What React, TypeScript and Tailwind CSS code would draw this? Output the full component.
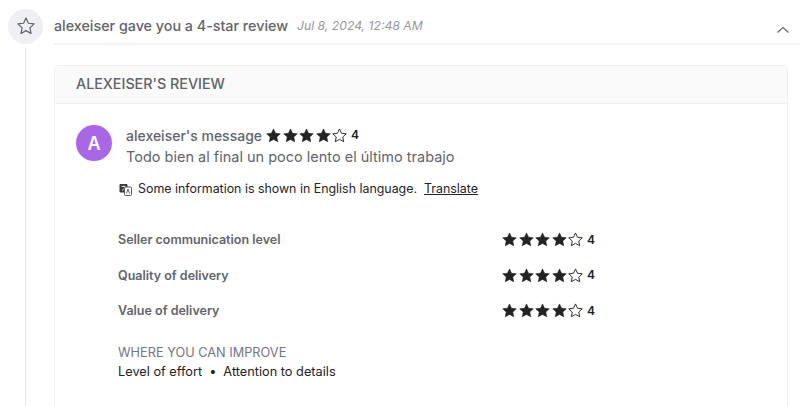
const font = { fontFamily: "Inter, sans-serif" };

function Star({ filled, size = 15 }: { filled: boolean; size?: number }) {
  return (
    <svg width={size} height={size} viewBox="0 0 24 24" className="shrink-0">
      <path
        d="M12 1.5l3.2 6.9 7.6.9-5.6 5.1 1.5 7.5L12 18.2l-6.7 3.7 1.5-7.5-5.6-5.1 7.6-.9z"
        fill={filled ? "#222325" : "none"}
        stroke="#222325"
        strokeWidth={filled ? 1 : 1.5}
        strokeLinejoin="round"
      />
    </svg>
  );
}

function Rating() {
  return (
    <div className="flex items-center">
      <div className="flex items-center gap-[1.5px]">
        <Star filled />
        <Star filled />
        <Star filled />
        <Star filled />
        <Star filled={false} />
      </div>
      <span className="ml-1 text-xs font-semibold text-[#222325]">4</span>
    </div>
  );
}

function TranslateIcon() {
  return (
    <svg width="13" height="13" viewBox="0 0 13 13" className="shrink-0">
      <rect x="0.5" y="1" width="8" height="8.5" rx="1" fill="#3a3a3a" />
      <path d="M2.5 3.5h4M4.5 2.5v1M3 7.5c1.5-.8 2.5-2 3-4" stroke="#fff" strokeWidth="0.8" fill="none" />
      <rect x="5.5" y="4" width="7" height="8.5" rx="1" fill="#fff" stroke="#555" />
      <path d="M7.5 10.5L9 6l1.5 4.5" stroke="#555" strokeWidth="0.9" fill="none" />
    </svg>
  );
}

function ScoreRow({ label }: { label: string }) {
  return (
    <div className="flex h-[35.5px] items-center">
      <span className="w-[384px] pt-[2px] text-[12.5px] font-semibold text-[#62646a]">{label}</span>
      <Rating />
    </div>
  );
}

export default function App() {
  return (
    <div style={font} className="flex h-[406px] w-[800px] overflow-hidden bg-white pl-2 pt-[9px]">
      <div className="flex w-[35px] shrink-0 flex-col items-center">
        <div className="flex h-[35px] w-[35px] items-center justify-center rounded-full bg-[#efeff4] pb-[2px]">
          <svg width="20" height="20" viewBox="0 0 24 24" fill="none" stroke="#5f6472" strokeWidth="1.5" strokeLinejoin="round">
            <path d="M12 2.5l2.9 6.2 6.8.8-5 4.7 1.3 6.8-6-3.4-6 3.4 1.3-6.8-5-4.7 6.8-.8z" />
          </svg>
        </div>
        <div className="mt-[4px] w-px flex-1 bg-[#e8e8e8]" />
      </div>
      <div className="ml-[11px] flex min-w-0 flex-1 flex-col">
        <div className="flex h-[36px] shrink-0 items-center border-b-2 border-[#f5f5f5]">
          <span className="text-[14.3px] font-medium text-[#62646a]">alexeiser gave you a 4-star review</span>
          <span className="ml-[9px] text-[12.2px] italic text-[#95979d]">Jul 8, 2024, 12:48 AM</span>
          <svg className="ml-auto mr-[10px] mt-[7px]" width="14" height="14" viewBox="0 0 14 14" fill="none" stroke="#62646a" strokeWidth="1.1">
            <path d="M1.5 9.5L7 4.5l5.5 5" />
          </svg>
        </div>
        <div className="mr-3 mt-5 h-[400px] shrink-0 rounded-t border border-[#f0f0f0]">
          <div className="flex h-[38px] items-center border-b border-[#f0f0f0] bg-[#fafafa] pb-[1px] pl-[21px] text-[14.3px] font-medium text-[#62646a]">
            ALEXEISER'S REVIEW
          </div>
          <div className="pl-[21px] pt-[21px]">
            <div className="flex">
              <div className="flex h-[36px] w-[36px] items-center justify-center rounded-full bg-[#a967e8] text-[18px] font-semibold text-white">
                A
              </div>
              <div className="ml-[14px]">
                <div className="flex h-[20px] items-center gap-[4px]">
                  <span className="text-[14px] font-medium text-[#62646a]">alexeiser's message</span>
                  <Rating />
                </div>
                <p className="mt-[1px] text-[14.5px] text-[#62646a]">Todo bien al final un poco lento el último trabajo</p>
              </div>
            </div>
            <div className="ml-[43px] mt-[12px] flex h-[20px] items-center text-[12.4px] text-[#222325]">
              <TranslateIcon />
              <span className="ml-[6px]">Some information is shown in English language.</span>
              <span className="ml-[7px] underline">Translate</span>
            </div>
            <div className="ml-[42px] mt-[22px]">
              <ScoreRow label="Seller communication level" />
              <ScoreRow label="Quality of delivery" />
              <ScoreRow label="Value of delivery" />
              <div className="mt-[15px] text-[12.75px] text-[#74767e]">WHERE YOU CAN IMPROVE</div>
              <div className="flex items-center text-[12.75px] text-[#222325]">
                <span>Level of effort</span>
                <span className="mx-[7px]">•</span>
                <span>Attention to details</span>
              </div>
            </div>
          </div>
        </div>
      </div>
    </div>
  );
}
